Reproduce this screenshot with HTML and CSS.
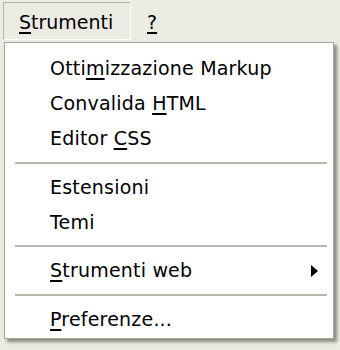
FILE: index.html
```html
<!DOCTYPE html>
<html lang="it">
<head>
    <meta charset="UTF-8">
    <title>Menu Strumenti</title>
    <link rel="stylesheet" href="styles.css">
</head>
<body>
    <div class="menubar">
        <div class="menu-title open"><u>S</u>trumenti</div>
        <div class="menu-title"><u>?</u></div>
    </div>

    <div class="dropdown">
        <div class="item">Otti<u>m</u>izzazione Markup</div>
        <div class="item">Convalida <u>H</u>TML</div>
        <div class="item">Editor <u>C</u>SS</div>
        <div class="separator"></div>
        <div class="item">Estensioni</div>
        <div class="item">Temi</div>
        <div class="separator"></div>
        <div class="item has-sub"><span><u>S</u>trumenti web</span><span class="arrow"></span></div>
        <div class="separator"></div>
        <div class="item"><u>P</u>referenze...</div>
    </div>
</body>
</html>
```

FILE: styles.css
```css
body {
    margin: 0;
    width: 340px;
    height: 350px;
    background: #ecebe3;
    font-family: 'DejaVu Sans', sans-serif;
    font-size: 19px;
    color: #000;
    overflow: hidden;
}

u {
    text-decoration-thickness: 2px;
    text-underline-offset: 3px;
}

/* Menu bar */
.menubar {
    display: flex;
    height: 42px;
    padding: 2px 0 0 3px;
    box-sizing: border-box;
}

.menu-title {
    height: 38px;
    padding: 0 14px 0 15px;
    line-height: 38px;
    box-sizing: border-box;
    border: 1px solid transparent;
}

.menu-title.open {
    width: 128px;
    border-color: #b5b2a8 #fff #fff #b5b2a8;
}

/* Dropdown */
.dropdown {
    margin-left: 4px;
    width: 330px;
    height: 297px;
    box-sizing: border-box;
    background: #fff;
    border: 1px solid #a7a59c;
    box-shadow: 3px 3px 3px rgba(60, 58, 50, 0.55);
    padding: 8px 0 0;
}

.item {
    height: 35px;
    line-height: 35px;
    padding-left: 45px;
    white-space: nowrap;
    letter-spacing: 0.2px;
}

.has-sub {
    display: flex;
    align-items: center;
    justify-content: space-between;
    padding-right: 15px;
}

.arrow {
    width: 0;
    height: 0;
    border-left: 7px solid #000;
    border-top: 6px solid transparent;
    border-bottom: 6px solid transparent;
}

.separator {
    height: 2px;
    margin: 6px 6px 6px 10px;
    background: #b9b7ad;
}

.separator + .item + .item + .separator {
    margin-top: 5px;
}
```
